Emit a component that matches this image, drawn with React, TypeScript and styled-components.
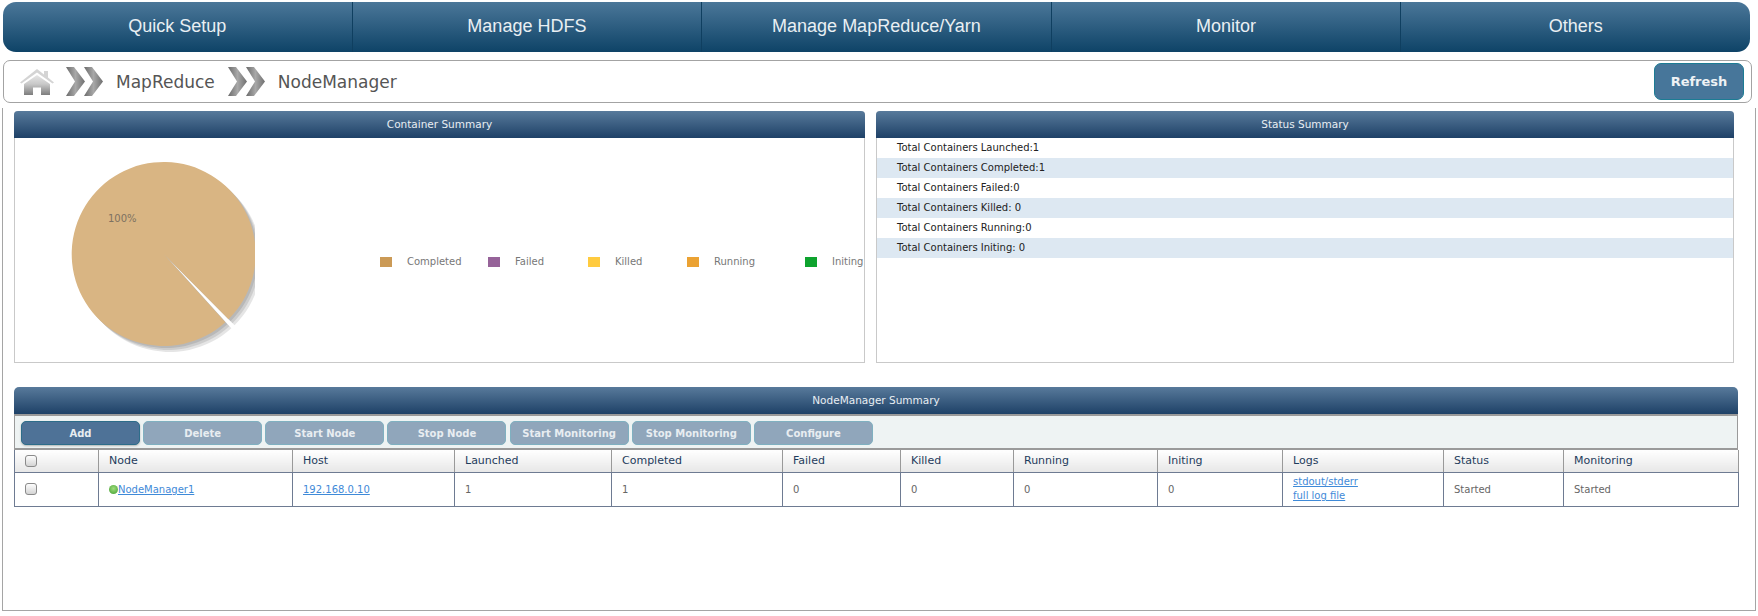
import styled, { createGlobalStyle } from 'styled-components';

const GlobalStyle = createGlobalStyle`
  html, body {
    margin: 0;
    padding: 0;
    background: #fff;
    font-family: 'DejaVu Sans', sans-serif;
  }
`;

const navItems = ['Quick Setup', 'Manage HDFS', 'Manage MapReduce/Yarn', 'Monitor', 'Others'];
const statusRows = [
  'Total Containers Launched:1',
  'Total Containers Completed:1',
  'Total Containers Failed:0',
  'Total Containers Killed: 0',
  'Total Containers Running:0',
  'Total Containers Initing: 0',
];
const legend = [
  { label: 'Completed', color: '#cb9a56', width: 81 },
  { label: 'Failed', color: '#966399', width: 73 },
  { label: 'Killed', color: '#ffcb3f', width: 72 },
  { label: 'Running', color: '#eba233', width: 91 },
  { label: 'Initing', color: '#0ea32e', width: 60 },
];
const actions = ['Add', 'Delete', 'Start Node', 'Stop Node', 'Start Monitoring', 'Stop Monitoring', 'Configure'];
const columns = [
  { label: 'Node', width: 194 },
  { label: 'Host', width: 162 },
  { label: 'Launched', width: 157 },
  { label: 'Completed', width: 171 },
  { label: 'Failed', width: 118 },
  { label: 'Killed', width: 113 },
  { label: 'Running', width: 144 },
  { label: 'Initing', width: 125 },
  { label: 'Logs', width: 161 },
  { label: 'Status', width: 120 },
  { label: 'Monitoring', width: 175 },
];

// pie with the thin gap jqplot leaves when one slice is 100%
const piePath = (cx: number, cy: number, r: number) => {
  const a1 = (47.9 * Math.PI) / 180;
  const a2 = (45.2 * Math.PI) / 180;
  const x1 = cx + r * Math.cos(a1);
  const y1 = cy + r * Math.sin(a1);
  const x2 = cx + r * Math.cos(a2);
  const y2 = cy + r * Math.sin(a2);
  return `M${cx} ${cy}L${x1} ${y1}A${r} ${r} 0 1 1 ${x2} ${y2}Z`;
};

const PieChart = () => (
  <PieSvg viewBox="0 0 240 224">
    {[6, 4, 2].map((o) => (
      <path key={o} d={piePath(148.7 + o, 116 + o, 92)} fill="#000" opacity="0.1" />
    ))}
    <path d={piePath(148.7, 116, 92)} fill="#d9b583" />
    <PieLabel x="93" y="84">100%</PieLabel>
  </PieSvg>
);

const HomeIcon = () => (
  <svg width="36" height="28" viewBox="0 0 36 28">
    <defs>
      <linearGradient id="homeFill" x1="0" y1="0" x2="0" y2="1">
        <stop offset="0" stopColor="#e6e6e6" />
        <stop offset="0.45" stopColor="#c9c9c9" />
        <stop offset="1" stopColor="#7d7d7d" />
      </linearGradient>
    </defs>
    <path d="M18 1L25 6.500V3H29V9.600L35 14.500L33.500 15.500L18 4.500L2.500 15.500L1 14.500Z" fill="#d4d4d4" />
    <path d="M18 7L31 16V27H22V19.500H14V27H5V16Z" fill="url(#homeFill)" />
  </svg>
);

const ChevronIcon = () => (
  <svg width="37" height="29" viewBox="0 0 37 29">
    <defs>
      <linearGradient id="chevFill" x1="0" y1="0" x2="1" y2="0">
        <stop offset="0" stopColor="#6a6a6a" />
        <stop offset="0.5" stopColor="#a8a8a8" />
        <stop offset="1" stopColor="#6f6f6f" />
      </linearGradient>
    </defs>
    <path d="M0 0L8 0L19 14.500L8 29L0 29L9 14.500Z" fill="url(#chevFill)" />
    <path d="M18 0L26 0L37 14.500L26 29L18 29L27 14.500Z" fill="url(#chevFill)" />
  </svg>
);

const App = () => (
  <Page>
    <GlobalStyle />
    <TopNav>
      {navItems.map((item) => (
        <NavItem key={item}>{item}</NavItem>
      ))}
    </TopNav>
    <Breadcrumb>
      <HomeSlot>
        <HomeIcon />
      </HomeSlot>
      <ChevronIcon />
      <CrumbText>MapReduce</CrumbText>
      <ChevronIcon />
      <CrumbText>NodeManager</CrumbText>
      <RefreshBtn>Refresh</RefreshBtn>
    </Breadcrumb>
    <Content>
      <TopPanels>
        <Panel>
          <PanelHead>Container Summary</PanelHead>
          <ChartBody>
            <PieChart />
            <Legend>
              {legend.map((item) => (
                <LegendItem key={item.label} $width={item.width}>
                  <Swatch $color={item.color} />
                  {item.label}
                </LegendItem>
              ))}
            </Legend>
          </ChartBody>
        </Panel>
        <Panel>
          <PanelHead>Status Summary</PanelHead>
          {statusRows.map((row) => (
            <StatusRow key={row}>{row}</StatusRow>
          ))}
        </Panel>
      </TopPanels>
      <TablePanel>
        <TableHead>NodeManager Summary</TableHead>
        <Toolbar>
          {actions.map((action, i) => (
            <ActionBtn key={action} $active={i === 0}>
              {action}
            </ActionBtn>
          ))}
        </Toolbar>
        <NodeTable>
          <thead>
            <tr>
              <HeadCell $width={84}>
                <Check type="checkbox" />
              </HeadCell>
              {columns.map((col) => (
                <HeadCell key={col.label} $width={col.width}>
                  {col.label}
                </HeadCell>
              ))}
            </tr>
          </thead>
          <tbody>
            <tr>
              <Cell>
                <Check type="checkbox" />
              </Cell>
              <Cell>
                <Dot />
                <NodeLink>NodeManager1</NodeLink>
              </Cell>
              <Cell>
                <NodeLink>192.168.0.10</NodeLink>
              </Cell>
              <Cell>1</Cell>
              <Cell>1</Cell>
              <Cell>0</Cell>
              <Cell>0</Cell>
              <Cell>0</Cell>
              <Cell>0</Cell>
              <Cell>
                <LogLink>stdout/stderr</LogLink>
                <LogLink>full log file</LogLink>
              </Cell>
              <Cell>Started</Cell>
              <Cell>Started</Cell>
            </tr>
          </tbody>
        </NodeTable>
      </TablePanel>
    </Content>
  </Page>
);

export default App;

const Page = styled.div`
  width: 1758px;
  height: 616px;
  padding-top: 2px;
  box-sizing: border-box;
  overflow: hidden;
`;

const TopNav = styled.div`
  display: flex;
  height: 50px;
  margin: 0 8px 0 3px;
  border-radius: 13px;
  overflow: hidden;
  background: linear-gradient(#4b7799, #0e4367);
`;

const NavItem = styled.div`
  flex: 1;
  display: flex;
  align-items: center;
  justify-content: center;
  padding-bottom: 2px;
  box-sizing: border-box;
  font-family: 'Liberation Sans', sans-serif;
  font-size: 18px;
  color: #e9eff3;
  border-left: 1px solid #0f3f60;

  &:first-child {
    border-left: none;
  }
`;

const Breadcrumb = styled.div`
  display: flex;
  align-items: center;
  height: 43px;
  margin: 8px 6px 0 3px;
  padding: 0 7px 0 15px;
  box-sizing: border-box;
  border: 1px solid #a3a3a3;
  border-radius: 7px;
`;

const HomeSlot = styled.div`
  display: flex;
  width: 47px;
`;

const CrumbText = styled.span`
  margin: 0 13px;
  font-size: 17px;
  color: #555;
`;

const RefreshBtn = styled.button`
  width: 90px;
  height: 37px;
  margin-left: auto;
  background: #47769a;
  border: 1px solid #1c7c94;
  border-radius: 7px;
  color: #eef2f5;
  font-family: 'DejaVu Sans', sans-serif;
  font-size: 13px;
  font-weight: bold;
`;

const Content = styled.div`
  height: 503px;
  margin: 5px 2px 0 2px;
  padding: 3px 0 0 11px;
  box-sizing: border-box;
  border: 1px solid #a5a5a5;
  border-top: none;
`;

const TopPanels = styled.div`
  display: grid;
  grid-template-columns: 851px 858px;
  gap: 11px;
`;

const Panel = styled.div`
  height: 252px;
  box-sizing: border-box;
  border: 1px solid #c9c9c9;
  border-top: none;
  border-radius: 4px 4px 0 0;
`;

const PanelHead = styled.div`
  height: 27px;
  margin: 0 -1px;
  line-height: 26px;
  text-align: center;
  font-size: 10.500px;
  color: #e8eef3;
  border-radius: 4px 4px 0 0;
  background: linear-gradient(#587a9b, #1e4167);
`;

const ChartBody = styled.div`
  display: flex;
  align-items: flex-start;
`;

const PieSvg = styled.svg`
  flex: none;
  width: 240px;
  height: 224px;
`;

const PieLabel = styled.text`
  font-size: 10px;
  fill: #7d7161;
  font-family: 'DejaVu Sans', sans-serif;
`;

const Legend = styled.div`
  display: flex;
  margin: 118px 0 0 125px;
`;

const LegendItem = styled.div<{ $width: number }>`
  display: flex;
  align-items: center;
  width: ${(p) => p.$width}px;
  margin-right: 27px;
  font-size: 10px;
  color: #777;
  white-space: nowrap;
`;

const Swatch = styled.span<{ $color: string }>`
  flex: none;
  width: 12px;
  height: 10px;
  margin-right: 15px;
  background: ${(p) => p.$color};
`;

const StatusRow = styled.div`
  height: 20px;
  padding-left: 20px;
  line-height: 19px;
  font-size: 10px;
  color: #222;

  &:nth-of-type(odd) {
    background: #dde8f2;
  }
`;

const TablePanel = styled.div`
  width: 1724px;
  margin-top: 24px;
`;

const TableHead = styled.div`
  height: 27px;
  line-height: 26px;
  text-align: center;
  font-size: 10.500px;
  color: #e8eef3;
  border-radius: 5px 5px 0 0;
  background: linear-gradient(#587a9b, #1e4167);
  border-bottom: 2px solid #9a9a9a;
`;

const Toolbar = styled.div`
  display: flex;
  gap: 3.170px;
  height: 34px;
  padding: 5px 0 0 6px;
  box-sizing: border-box;
  background: #eef3f3;
  border-right: 1px solid #9a9a9a;
  border-bottom: 2px solid #9a9a9a;
  border-left: 1px solid #9a9a9a;
`;

const ActionBtn = styled.button<{ $active: boolean }>`
  width: 119px;
  height: 24px;
  padding: 0;
  border-radius: 5px;
  border: 1px solid ${(p) => (p.$active ? '#2d6d8a' : '#7fb0c0')};
  background: ${(p) => (p.$active ? '#4e7297' : '#90a6bb')};
  box-shadow: ${(p) => (p.$active ? '0 1px 2px rgba(0, 0, 0, 0.25)' : 'none')};
  color: #e8edf1;
  font-family: 'DejaVu Sans', sans-serif;
  font-size: 10px;
  font-weight: bold;
`;

const NodeTable = styled.table`
  width: 1724px;
  table-layout: fixed;
  border-collapse: collapse;
  border-left: 1px solid #6e7b92;
`;

const HeadCell = styled.th<{ $width: number }>`
  width: ${(p) => p.$width}px;
  height: 22px;
  padding: 0 0 0 10px;
  box-sizing: border-box;
  text-align: left;
  font-size: 11px;
  font-weight: normal;
  color: #1f3c5c;
  background: linear-gradient(#fff, #e7e7e7);
  border-right: 1px solid #999;
  border-bottom: 1px solid #6e7b92;
`;

const Cell = styled.td`
  height: 34px;
  padding: 0 0 0 10px;
  box-sizing: border-box;
  font-size: 10px;
  color: #666;
  border-right: 1px solid #6e7b92;
  border-bottom: 1px solid #6e7b92;
`;

const Check = styled.input`
  appearance: none;
  display: block;
  width: 12px;
  height: 12px;
  margin: 0;
  border: 1px solid #8a8a8a;
  border-radius: 3px;
  background: linear-gradient(#fdfdfd, #d4d4d4);
`;

const Dot = styled.span`
  display: inline-block;
  width: 9px;
  height: 9px;
  vertical-align: -1px;
  border-radius: 50%;
  background: radial-gradient(circle at 50% 40%, #9fdc7c, #3f9e2f);
`;

const NodeLink = styled.a`
  color: #3f8ad8;
  text-decoration: underline;
`;

const LogLink = styled(NodeLink)`
  display: block;
  line-height: 14px;
`;
